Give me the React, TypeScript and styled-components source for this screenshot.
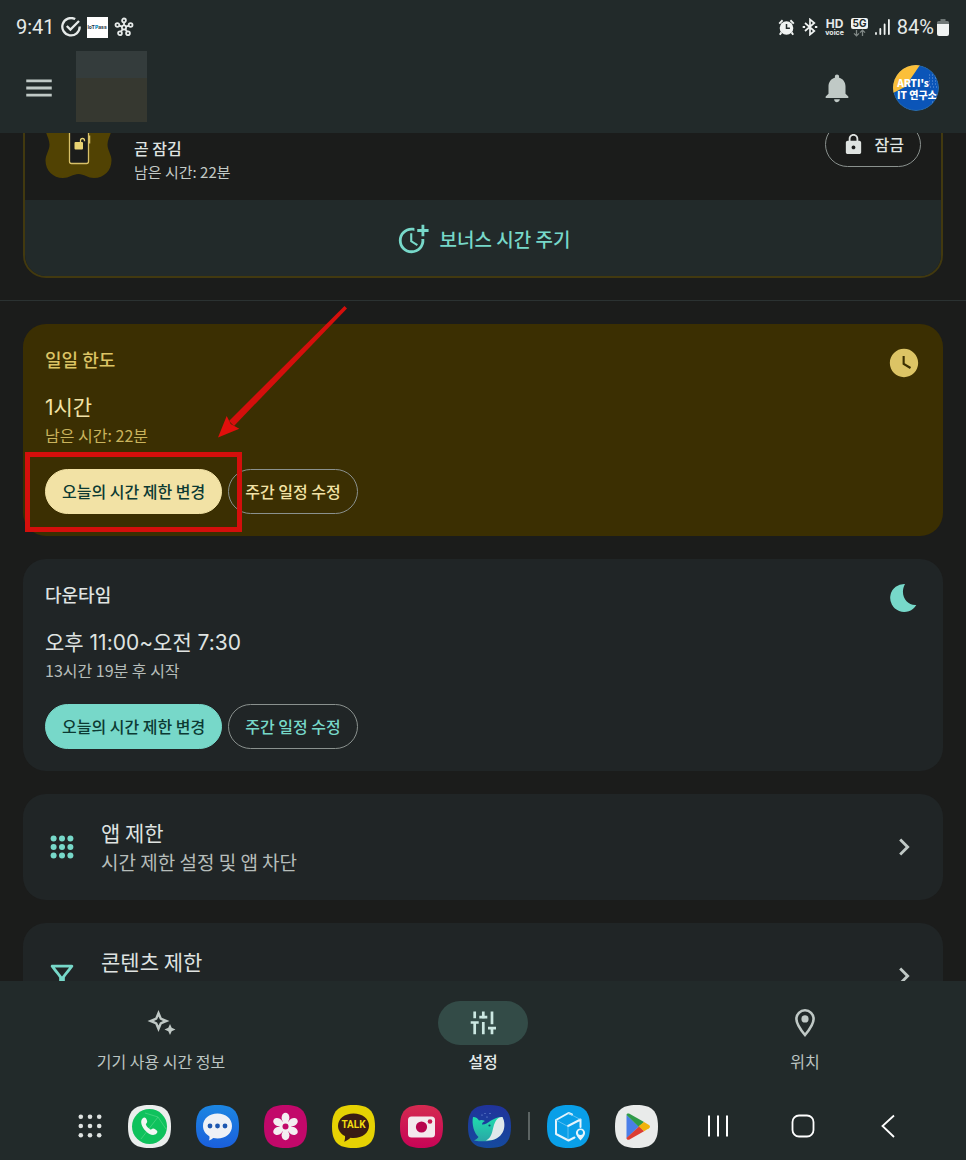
import React from "react";
import styled, { createGlobalStyle } from "styled-components";
import {
  MdMenu,
  MdNotifications,
  MdLock,
  MdMoreTime,
  MdWatchLater,
  MdChevronRight,
  MdOutlineFilterAlt,
} from "react-icons/md";

const cjk = `"Noto Sans CJK KR", "Noto Sans", sans-serif`;
const c = {
  bg: "#1b1c1b",
  bar: "#222a2a",
  card: "#202526",
  gold: "#3b2f02",
  teal: "#77d8c9",
  yellow: "#dcc465",
  cream: "#f2e2a5",
  text: "#dfe3e1",
  muted: "#b6bdba",
};

const GlobalStyle = createGlobalStyle`
  *, *::before, *::after { box-sizing: border-box; }
  html, body { margin: 0; background: ${c.bg}; }
  body { font-family: ${cjk}; color: ${c.text}; }
  button { font: inherit; color: inherit; background: none; border: 0; padding: 0; margin: 0; cursor: pointer; }
  h2, p { margin: 0; }
  svg { display: block; flex: none; }
`;

const Screen = styled.div`
  height: 100vh;
  display: flex;
  flex-direction: column;
  overflow: hidden;
`;

const Header = styled.header`
  background: ${c.bar};
  flex: none;
`;

const StatusBar = styled.div`
  height: 50px;
  padding: 4px 17px 0 16px;
  display: flex;
  align-items: center;
  justify-content: space-between;
  font: 400 20px/24px Roboto, sans-serif;
  color: #e6eae9;
`;

const StatusGroup = styled.div<{ $gap: number }>`
  display: flex;
  align-items: center;
  gap: ${(p) => p.$gap}px;
`;

const Network = styled.span`
  display: flex;
  flex-direction: column;
  align-items: center;
  font: 700 12px/11px Inter, sans-serif;
  small { font-size: 7px; line-height: 8px; }
`;

const PassBadge = styled.span`
  width: 21px;
  height: 21px;
  background: #fff;
  color: #25323c;
  font: 700 5px/21px Inter, sans-serif;
  text-align: center;
  b { color: #1592c4; }
`;

const Battery = styled.span`
  display: flex;
  align-items: center;
  gap: 3px;
`;

const AppBar = styled.div`
  height: 83px;
  padding: 0 27px 7px 22px;
  display: flex;
  align-items: center;
`;

const IconButton = styled.button`
  width: 34px;
  height: 34px;
  color: #c0c9c6;
`;

const BlankLogo = styled.div`
  width: 71px;
  height: 71px;
  margin: 0 auto 4px 20px;
  background: linear-gradient(#343c3c 38%, #363830 38%);
`;

const Avatar = styled.button`
  width: 46px;
  height: 46px;
  margin-left: 39px;
  border-radius: 50%;
  overflow: hidden;
`;

const Main = styled.main`
  flex: 1;
  min-height: 0;
  overflow: hidden;
`;

/* The list rests part-way down, so the device card starts above the fold. */
const Scrolled = styled.div`
  margin-top: -33px;
`;

const Section = styled.section`
  padding: 0 23px;
  display: flex;
  flex-direction: column;
  gap: 23px;
`;

const Divider = styled.hr`
  height: 1px;
  border: 0;
  margin: 22px 0 23px;
  background: #2b3232;
`;

const DeviceCard = styled.article`
  border: 2px solid #42390f;
  border-radius: 23px;
  overflow: hidden;
`;

const DeviceRow = styled.div`
  height: 98px;
  padding: 0 20px 13px;
  display: flex;
  align-items: center;
`;

const DeviceText = styled.div`
  flex: 1;
  align-self: flex-end;
  margin-left: 22px;
  padding-bottom: 4px;
`;

const DeviceState = styled.p`
  font-size: 16px;
  line-height: 23px;
  font-weight: 500;
`;

const Note = styled.p<{ $color: string }>`
  font-size: 16px;
  line-height: 26px;
  color: ${(p) => p.$color};
`;

const DeviceNote = styled(Note)`
  font-size: 15px;
  line-height: 23px;
`;

const Pill = styled.button<{ $fill?: string; $ink: string }>`
  height: 45px;
  padding: 0 16px 1px;
  display: flex;
  align-items: center;
  gap: 10px;
  border-radius: 23px;
  border: 1px solid ${(p) => p.$fill ?? "#8a918e"};
  background: ${(p) => p.$fill ?? "transparent"};
  color: ${(p) => p.$ink};
  font-size: 16px;
  font-weight: 500;
  white-space: nowrap;
`;

const Bonus = styled.button`
  width: 100%;
  height: 76px;
  padding-top: 2px;
  display: flex;
  align-items: center;
  justify-content: center;
  gap: 10px;
  background: ${c.bar};
  color: ${c.teal};
  font-size: 19px;
  font-weight: 500;
  line-height: 28px;
`;

const LimitCard = styled.article<{ $bg: string }>`
  position: relative;
  padding: 22px;
  border-radius: 23px;
  background: ${(p) => p.$bg};
`;

const LimitHead = styled.div<{ $color: string }>`
  height: 28px;
  display: flex;
  justify-content: space-between;
  color: ${(p) => p.$color};
`;

const LimitTitle = styled.h2`
  font-size: 18px;
  line-height: 26px;
  font-weight: 500;
`;

const LimitValue = styled.p<{ $color: string }>`
  margin-top: 20px;
  font: 400 21px/28px Inter, ${cjk};
  color: ${(p) => p.$color};
`;

const Actions = styled.div`
  display: flex;
  gap: 6px;
  margin-top: 21px;
`;

const Highlight = styled.div`
  position: absolute;
  left: 2px;
  top: 128px;
  width: 217px;
  height: 80px;
  border: 5px solid #d40f0c;
  pointer-events: none;
`;

const Arrow = styled.svg`
  position: absolute;
  left: 194px;
  top: -20px;
  pointer-events: none;
`;

const LinkCard = styled.button`
  width: 100%;
  height: 106px;
  padding: 0 22px;
  display: flex;
  align-items: center;
  gap: 22px;
  border-radius: 23px;
  background: ${c.card};
  color: ${c.teal};
  text-align: left;
`;

const LinkText = styled.span`
  flex: 1;
  display: flex;
  flex-direction: column;
`;

const LinkTitle = styled.span`
  font-size: 21px;
  line-height: 30px;
  color: ${c.text};
`;

const LinkSub = styled.span`
  font-size: 19px;
  line-height: 30px;
  color: ${c.muted};
`;

const Footer = styled.footer`
  flex: none;
  background: ${c.bar};
`;

const Tabs = styled.nav`
  display: grid;
  grid-template-columns: repeat(3, 1fr);
  height: 111px;
  padding-top: 20px;
`;

const Tab = styled.button<{ $active?: boolean }>`
  display: flex;
  flex-direction: column;
  align-items: center;
  gap: 4px;
  font-size: 16px;
  line-height: 24px;
  font-weight: ${(p) => (p.$active ? 500 : 400)};
  color: ${(p) => (p.$active ? "#e6ebe9" : "#bcc5c2")};
`;

const TabIcon = styled.span<{ $active?: boolean }>`
  width: 90px;
  height: 44px;
  display: grid;
  place-items: center;
  border-radius: 22px;
  background: ${(p) => (p.$active ? "#334b47" : "transparent")};
  color: ${(p) => (p.$active ? "#cce8e2" : "#c0c9c6")};
`;

const Dock = styled.nav`
  height: 68px;
  padding-left: 21px;
  display: flex;
  align-items: center;
  justify-content: center;
`;

const DockGroup = styled.div<{ $gap: number }>`
  display: flex;
  align-items: center;
  gap: ${(p) => p.$gap}px;
`;

const DockRule = styled.span`
  width: 2px;
  height: 28px;
  margin: 0 17px;
  background: #5c6463;
`;

const NavKeys = styled(DockGroup)`
  margin-left: 38px;
`;

const TalkMark = styled.span`
  grid-area: 1 / 1;
  margin-bottom: 2px;
  font: 700 10px/12px Roboto, sans-serif;
  color: #f2dc10;
`;

const DockButton = styled.button`
  display: grid;
  place-items: center;
  > svg { grid-area: 1 / 1; }
`;

function Squircle({ fill, id, to, children }: { fill: string; id?: string; to?: string; children: React.ReactNode }) {
  return (
    <svg width="43" height="43" viewBox="0 0 43 43">
      {id && (
        <linearGradient id={id} x1="0" y1="0" x2="0" y2="1">
          <stop offset="0" stopColor={fill} />
          <stop offset="1" stopColor={to} />
        </linearGradient>
      )}
      <path
        d="M21.5 0C37 0 43 6 43 21.5S37 43 21.5 43 0 37 0 21.5 6 0 21.5 0Z"
        fill={id ? `url(#${id})` : fill}
      />
      {children}
    </svg>
  );
}

const DoneIcon = () => (
  <svg width="20" height="20" viewBox="0 0 20 20" fill="none" stroke="#e6eae9" strokeWidth="2.3">
    <path d="M14.2 2.1A8.7 8.7 0 1 0 18.7 9.6" />
    <path d="M5.8 9l3.6 3.6L18 4" />
  </svg>
);

const HubIcon = () => (
  <svg width="20" height="20" viewBox="0 0 20 20" fill="none" stroke="#e6eae9" strokeWidth="1.8">
    <circle cx="10" cy="10.4" r="2.1" />
    <circle cx="10" cy="3.4" r="1.9" />
    <circle cx="3.4" cy="8" r="1.9" />
    <circle cx="16.6" cy="8" r="1.9" />
    <circle cx="6" cy="16.2" r="1.9" />
    <circle cx="14" cy="16.2" r="1.9" />
    <path d="M10 5.3v3M5.2 8.7l2.8 1M14.8 8.7l-2.8 1M7 14.6l1.7-2.4M13 14.6l-1.7-2.4" />
  </svg>
);

const AlarmIcon = () => (
  <svg width="17" height="17" viewBox="0 0 17 17">
    <circle cx="8.5" cy="9" r="6.8" fill="#f0f3f2" />
    <path d="M1.2 4.6L4.6 1.3M15.8 4.6l-3.4-3.3M3.4 13.4l-1.6 2.4M13.6 13.4l1.6 2.4" stroke="#f0f3f2" strokeWidth="1.9" />
    <path d="M8.5 5v4.3h3.4" stroke={c.bar} strokeWidth="1.5" fill="none" />
  </svg>
);

const BluetoothIcon = () => (
  <svg width="16" height="18" viewBox="0 0 16 18" fill="none" stroke="#f0f3f2" strokeWidth="1.7">
    <path d="M3 5l9.3 8L8 16.6V1.4L12.3 5 3 13" />
    <path d="M.7 9h2.4M12.9 9h2.4" strokeWidth="2.2" />
  </svg>
);

const FiveGIcon = () => (
  <svg width="17" height="19" viewBox="0 0 17 19">
    <rect width="17" height="11" rx="2" fill="#f0f3f2" />
    <text x="8.5" y="9" textAnchor="middle" fontFamily="Inter, sans-serif" fontWeight="700" fontSize="10" fill={c.bar}>5G</text>
    <path d="M5.5 12v6M3 15.4l2.5 2.5L8 15.4M11.5 18v-6M9 14.6l2.5-2.5L14 14.6" fill="none" stroke="#7f8785" strokeWidth="1.3" />
  </svg>
);

const SignalIcon = () => (
  <svg width="15" height="16" viewBox="0 0 15 16" stroke="#f0f3f2" strokeWidth="1.8" strokeLinecap="round">
    <path d="M1 14v1M5.3 10v5M9.6 5.5V15M13.9 1v14" />
  </svg>
);

const BatteryIcon = () => (
  <svg width="12" height="17" viewBox="0 0 12 17">
    <path d="M3.5 0h5v2h2A1.5 1.5 0 0 1 12 3.5V6H0V3.5A1.5 1.5 0 0 1 1.5 2h2Z" fill="#6f7776" />
    <path d="M0 5h12v10a2 2 0 0 1-2 2H2a2 2 0 0 1-2-2Z" fill="#f0f3f2" />
  </svg>
);

const AvatarArt = () => (
  <svg width="46" height="46" viewBox="0 0 46 46">
    <circle cx="23" cy="23" r="22.5" fill="#0b55b8" stroke="#2b6fae" />
    <path d="M0 28A23 23 0 0 1 27 0L12 22Z" fill="#fbbf3a" />
    <g stroke="#6c9bdc" strokeWidth="1" strokeDasharray="1 2">
      <path d="M36 10h9M36 13h9M36 16h9M36 19h9M37 22h9M39 37h6" />
    </g>
    <g fill="#fff" fontWeight="900" textAnchor="middle" fontFamily={cjk}>
      <text x="20" y="22" fontSize="10">ARTI's</text>
      <text x="24" y="34" fontSize="10">IT 연구소</text>
    </g>
  </svg>
);

const DeviceIcon = () => (
  <svg width="67" height="67" viewBox="0 0 67 67">
    <path
      d="M18 0C24 0 28 4 33.5 4S43 0 49 0c10 0 17.5 8 17.5 17.5 0 6-4 10-4 16s4 10 4 16C66.5 59.5 59 67 49 67c-6 0-10-4-15.5-4S24 67 18 67C8 67 .5 59.5.5 49.5c0-6 4-10 4-16s-4-10-4-16C.5 8 8 0 18 0Z"
      fill="#514203"
    />
    <rect x="24.5" y="14.5" width="19" height="38" rx="2" fill={c.bg} stroke="#d8c068" strokeWidth="1.3" />
    <path d="M44.5 24.5v8" stroke="#d8c068" strokeWidth="1.5" />
    <rect x="29.5" y="31" width="8.5" height="7.5" rx="1" fill="#e8d273" />
    <path d="M35.5 31v-1.500a2 2 0 0 1 4 0v.8" fill="none" stroke="#e8d273" strokeWidth="1.3" />
  </svg>
);

const MoonIcon = () => (
  <svg width="34" height="34" viewBox="0 0 34 34">
    <path d="M18 3A14 14 0 1 0 29.3 24C20 25 12 14 18 3Z" fill={c.teal} />
  </svg>
);

const DotsIcon = ({ step, r, size }: { step: number; r: number; size: number }) => (
  <svg width={size} height={size} viewBox={`0 0 ${size} ${size}`} fill="currentColor">
    {[-1, 0, 1].map((y) =>
      [-1, 0, 1].map((x) => <circle key={`${x}${y}`} cx={size / 2 + x * step} cy={size / 2 + y * step} r={r} />)
    )}
  </svg>
);

const SparkIcon = () => (
  <svg width="34" height="34" viewBox="0 0 34 34" fill="currentColor">
    <path
      fillRule="evenodd"
      d="M14.5 4l3.2 7.8 7.8 3.2-7.8 3.2-3.2 7.8-3.2-7.8L3.5 15l7.8-3.2ZM14.5 10.5l-1.4 3.1L10 15l3.1 1.4 1.4 3.1 1.4-3.1L19 15l-3.1-1.4Z"
    />
    <path d="M26 18l1.7 3.8 3.8 1.7-3.8 1.7L26 29l-1.7-3.8-3.8-1.7 3.8-1.7Z" />
  </svg>
);

const SlidersIcon = () => (
  <svg width="34" height="34" viewBox="0 0 34 34" stroke="currentColor" strokeWidth="2.7">
    <path d="M8.7 5.5v6.7M8.7 16.5v11.7M17.3 5.5v6.7M17.3 16v12.200M26 5.5v12.7M26 22v6.2" />
    <path d="M4.7 16.5h8M13.3 11.2h8M22 22.200h8" />
  </svg>
);

const PinIcon = () => (
  <svg width="34" height="34" viewBox="0 0 34 34">
    <path
      d="M17 4.300A8.600 8.600 0 0 0 8.400 12.900C8.400 18.600 17 29 17 29S25.600 18.600 25.600 12.900A8.600 8.600 0 0 0 17 4.300Z"
      fill="none"
      stroke="currentColor"
      strokeWidth="2.6"
    />
    <circle cx="17" cy="12.9" r="3.6" fill="currentColor" />
  </svg>
);

const Petals = () => (
  <g fill="#f3eef1">
    {[0, 60, 120, 180, 240, 300].map((a) => (
      <ellipse key={a} cx="21.5" cy="12.8" rx="3.9" ry="5" transform={`rotate(${a} 21.5 21.5)`} />
    ))}
    <circle cx="21.5" cy="21.5" r="6" />
    <circle cx="21.5" cy="21.5" r="3" fill="#c2086a" />
  </g>
);

export default function App() {
  return (
    <Screen>
      <GlobalStyle />
      <Header>
        <StatusBar>
          <StatusGroup $gap={6}>
            <span>9:41</span>
            <DoneIcon />
            <PassBadge>IoT<b>P</b>ass</PassBadge>
            <HubIcon />
          </StatusGroup>
          <StatusGroup $gap={7}>
            <AlarmIcon />
            <BluetoothIcon />
            <Network>HD<small>voice</small></Network>
            <FiveGIcon />
            <SignalIcon />
            <Battery>84%<BatteryIcon /></Battery>
          </StatusGroup>
        </StatusBar>
        <AppBar>
          <IconButton aria-label="메뉴"><MdMenu size={34} /></IconButton>
          <BlankLogo />
          <IconButton aria-label="알림"><MdNotifications size={34} /></IconButton>
          <Avatar aria-label="계정"><AvatarArt /></Avatar>
        </AppBar>
      </Header>

      <Main>
        <Scrolled>
          <Section>
            <DeviceCard>
              <DeviceRow>
                <DeviceIcon />
                <DeviceText>
                  <DeviceState>곧 잠김</DeviceState>
                  <DeviceNote $color="#c3cac7">남은 시간: 22분</DeviceNote>
                </DeviceText>
                <Pill $ink={c.text}><MdLock size={23} />잠금</Pill>
              </DeviceRow>
              <Bonus><MdMoreTime size={34} />보너스 시간 주기</Bonus>
            </DeviceCard>
          </Section>
          <Divider />
          <Section>
            <LimitCard $bg={c.gold}>
              <LimitHead $color={c.yellow}>
                <LimitTitle>일일 한도</LimitTitle>
                <MdWatchLater size={34} />
              </LimitHead>
              <LimitValue $color={c.cream}>1시간</LimitValue>
              <Note $color="#c9b35c">남은 시간: 22분</Note>
              <Actions>
                <Pill $fill={c.cream} $ink="#0c3a33">오늘의 시간 제한 변경</Pill>
                <Pill $ink={c.cream}>주간 일정 수정</Pill>
              </Actions>
              <Highlight />
              <Arrow width="132" height="136" viewBox="0 0 132 136">
                <path d="M127.5 2l2.5 2.5L17 122l-5-5Z" fill="#d40f0c" />
                <path d="M1 133.500l8.700-21.500 4 8 8.600 4.700Z" fill="#e00f0c" />
              </Arrow>
            </LimitCard>

            <LimitCard $bg={c.card}>
              <LimitHead $color={c.text}>
                <LimitTitle>다운타임</LimitTitle>
                <MoonIcon />
              </LimitHead>
              <LimitValue $color={c.text}>오후 11:00~오전 7:30</LimitValue>
              <Note $color={c.muted}>13시간 19분 후 시작</Note>
              <Actions>
                <Pill $fill={c.teal} $ink="#0c3a33">오늘의 시간 제한 변경</Pill>
                <Pill $ink={c.teal}>주간 일정 수정</Pill>
              </Actions>
            </LimitCard>

            <LinkCard>
              <DotsIcon size={34} step={8.4} r={3} />
              <LinkText>
                <LinkTitle>앱 제한</LinkTitle>
                <LinkSub>시간 제한 설정 및 앱 차단</LinkSub>
              </LinkText>
              <MdChevronRight size={34} color="#c0c9c6" />
            </LinkCard>

            <LinkCard>
              <MdOutlineFilterAlt size={34} />
              <LinkText>
                <LinkTitle>콘텐츠 제한</LinkTitle>
                <LinkSub>&nbsp;</LinkSub>
              </LinkText>
              <MdChevronRight size={34} color="#c0c9c6" />
            </LinkCard>
          </Section>
        </Scrolled>
      </Main>

      <Footer>
        <Tabs>
          <Tab><TabIcon><SparkIcon /></TabIcon>기기 사용 시간 정보</Tab>
          <Tab $active><TabIcon $active><SlidersIcon /></TabIcon>설정</Tab>
          <Tab><TabIcon><PinIcon /></TabIcon>위치</Tab>
        </Tabs>
        <Dock>
          <DockGroup $gap={25}>
            <DockButton aria-label="모든 앱"><DotsIcon size={26} step={9.2} r={2.3} /></DockButton>
            <DockButton aria-label="전화">
              <Squircle fill="#ebeeed">
                <circle cx="21.5" cy="21.5" r="17.5" fill="#0fc25d" />
                <path d="M13 34L30 12l8 12M30 12L17 8" stroke="#5fd88f" strokeWidth=".6" fill="none" />
                <path
                  d="M14.5 13.5c2-1.8 3.3-.8 4.2 1.2.9 2 .6 2.9-.8 4.2-.6 1 3.3 5.6 5.2 5.6 1.5-1.2 2.6-1.2 4.4-.1 2 1.2 2.6 2.4 1 4.2-2.6 2.7-7 1.4-10.8-2.5-4-4.2-6-9.8-3.2-12.6Z"
                  fill="#f3f6f4"
                />
              </Squircle>
            </DockButton>
            <DockButton aria-label="메시지">
              <Squircle fill="#1c86e2" id="msg" to="#1a5fdc">
                <path d="M21.5 8.5c8.3 0 14.5 5.2 14.5 12.5S29.8 33.5 21.5 33.5c-1.5 0-3-.2-4.3-.5-1.3 1.2-2.6 2-4.4 2.4.7-1.4.9-2.7.5-4.2C9.5 29 7 25.4 7 21 7 13.7 13.2 8.5 21.5 8.5Z" fill="#eef1f6" />
                <g fill="#1d57b0"><circle cx="14" cy="21" r="2.4" /><circle cx="21.5" cy="21" r="2.4" /><circle cx="29" cy="21" r="2.4" /></g>
              </Squircle>
            </DockButton>
            <DockButton aria-label="갤러리"><Squircle fill="#c2086a"><Petals /></Squircle></DockButton>
            <DockButton aria-label="카카오톡">
              <Squircle fill="#e6d203">
                <path d="M21.5 8.5c9 0 15.5 5.4 15.5 12.3S30.5 33 21.5 33c-1 0-2-.1-3-.2-1.8 1.6-4 3-6.3 4 .8-2 1-3.7.8-5.7C8.7 28.9 6 25.2 6 20.8 6 13.9 12.5 8.5 21.5 8.5Z" fill="#3a1c14" />
              </Squircle>
              <TalkMark>TALK</TalkMark>
            </DockButton>
            <DockButton aria-label="카메라">
              <Squircle fill="#d42a50" id="cam" to="#c70356">
                <rect x="8" y="11.5" width="27" height="21" rx="3.5" fill="#f3e9ed" />
                <circle cx="21.5" cy="22" r="5.6" fill="#b8044e" />
                <circle cx="30" cy="16.5" r="2.3" fill="#c9174f" />
              </Squircle>
            </DockButton>
            <DockButton aria-label="웨일">
              <Squircle fill="#20339b" id="whale" to="#154a9e">
                <linearGradient id="body" x1="0" y1="0" x2="0" y2="1">
                  <stop offset="0" stopColor="#1fdcae" /><stop offset="1" stopColor="#2aa6a6" />
                </linearGradient>
                <path d="M5 12c3 .2 5 1.5 6 3.5 2-1 4-.5 6 .5-2 .8-3 2-3 3.500C19 20.5 24 12 34 12c3 4 4 20-11 23.500-6 1.300-11 1-17 0 2-.8 3.500-2 4.500-3.500C6 28 3.500 19 5 12Z" fill="url(#body)" />
                <path d="M18 35.500c7-3 6-12 9-18 2-4.500 5-5.500 7.500-5.500C39.500 22 35 36 18 35.500Z" fill="#dfe8ea" />
                <circle cx="21.5" cy="20.5" r="1.1" fill="#0e4b70" />
                <g fill="#8aa8e8"><circle cx="14" cy="10" r=".6" /><circle cx="19" cy="12" r=".6" /><circle cx="22" cy="8.500" r=".6" /><circle cx="17" cy="8.500" r=".5" /></g>
              </Squircle>
            </DockButton>
          </DockGroup>
          <DockRule />
          <DockGroup $gap={25}>
            <DockButton aria-label="스마트싱스 파인드">
              <Squircle fill="#099fe8">
                <path d="M25 9.5L21.5 8 9 15v14l12.5 6.500 6-3M21 21l12.500-6.500V22" fill="none" stroke="#e4f4fc" strokeWidth="2" strokeLinejoin="round" strokeLinecap="round" />
                <path d="M9 15l12 6.500v13M21 8l12.500 6.500" fill="none" stroke="#7fcdf3" strokeWidth=".7" />
                <path d="M33.5 35.500c-3-3.200-4.600-5.400-4.600-7.500a4.600 4.600 0 0 1 9.200 0c0 2.100-1.600 4.300-4.600 7.500Z" fill="#e4f4fc" />
                <circle cx="33.5" cy="27.5" r="2.500" fill="#099fe8" />
              </Squircle>
            </DockButton>
            <DockButton aria-label="플레이 스토어">
              <Squircle fill="#e9ebea">
                <path d="M11.5 10v23.5L24 21.5Z" fill="#4a7fe8" />
                <path d="M11.5 10c0-1.500 2-1.700 3-1.200L29 17l-5 5Z" fill="#2f9a48" />
                <path d="M29 17l5 3c1.300.9 1.300 2.400 0 3.300l-5 3-5.500-5Z" fill="#f0b20c" />
                <path d="M11.5 33c0 1.700 2 2.200 3 1.600L29 26.300l-5-4.800Z" fill="#dc3e32" />
              </Squircle>
            </DockButton>
          </DockGroup>
          <NavKeys $gap={41}>
            <DockButton aria-label="최근 앱">
              <svg width="44" height="44" viewBox="0 0 44 44" stroke="#fff" strokeWidth="2"><path d="M13 11.5v21M22 11.5v21M31 11.5v21" /></svg>
            </DockButton>
            <DockButton aria-label="홈">
              <svg width="44" height="44" viewBox="0 0 44 44" fill="none" stroke="#fff" strokeWidth="1.8"><rect x="11.5" y="11.5" width="21" height="21" rx="6.5" /></svg>
            </DockButton>
            <DockButton aria-label="뒤로">
              <svg width="44" height="44" viewBox="0 0 44 44" fill="none" stroke="#fff" strokeWidth="1.8"><path d="M28 11.5L16.5 22 28 33" /></svg>
            </DockButton>
          </NavKeys>
        </Dock>
      </Footer>
    </Screen>
  );
}
